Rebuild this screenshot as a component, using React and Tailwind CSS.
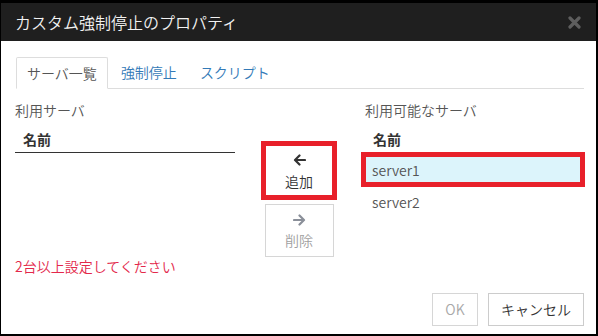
import React from "react";

const font = { fontFamily: '"Noto Sans CJK JP", "Noto Sans", sans-serif' };

function ArrowLeft({ color }) {
  return (
    <svg width="13" height="12" viewBox="0 0 13 12" fill="none">
      <path d="M12 6H2.5M6.5 1.5L2 6l4.5 4.5" stroke={color} strokeWidth="2.2" strokeLinecap="round" strokeLinejoin="round" />
    </svg>
  );
}
function ArrowRight({ color }) {
  return (
    <svg width="13" height="12" viewBox="0 0 13 12" fill="none">
      <path d="M1 6h9.5M6.5 1.5L11 6l-4.5 4.5" stroke={color} strokeWidth="2.2" strokeLinecap="round" strokeLinejoin="round" />
    </svg>
  );
}

export default function App() {
  return (
    <div className="w-[598px] h-[336px] bg-black pt-[3px] pl-[1px] pr-[2px] pb-[2px] font-[350]" style={font}>
      <div className="flex flex-col w-full h-full bg-white">
        {/* Header */}
        <div className="h-[38px] shrink-0 bg-[#1f1f1f] flex items-center justify-between pl-[14px] pr-[15px]">
          <span className="text-[16px] leading-[20px] text-[#f2f2f2]">カスタム強制停止のプロパティ</span>
          <svg width="13" height="13" viewBox="0 0 13 13">
            <path d="M2 2L11 11M11 2L2 11" stroke="#5e5e5e" strokeWidth="3.2" strokeLinecap="round" />
          </svg>
        </div>

        {/* Tabs */}
        <div className="mt-[16px] ml-[15px] mr-[12px] flex border-b border-[#dddddd] h-[32px]">
          <div className="h-[32px] -mb-[1px] border border-[#dddddd] border-b-white bg-white rounded-t-[2px] px-[10px] flex items-center text-[14px] text-[#555555]">
            サーバ一覧
          </div>
          <div className="ml-[2px] h-[31px] px-[11px] flex items-center text-[14px] text-[#337ab7]">強制停止</div>
          <div className="ml-[1px] h-[31px] px-[11px] flex items-center text-[14px] text-[#337ab7]">スクリプト</div>
        </div>

        {/* Body */}
        <div className="flex pl-[14px]">
          {/* Left */}
          <div className="w-[220px] pt-[11px]">
            <div className="h-[20px] text-[14px] leading-[20px] text-[#555555]">利用サーバ</div>
            <div className="h-[33px] flex items-end pb-[3px] border-b border-[#333333] pl-[8px]">
              <span className="text-[14px] leading-[20px] font-bold text-[#333333]">名前</span>
            </div>
          </div>

          {/* Middle */}
          <div className="ml-[26px] w-[76px] pt-[52px] flex flex-col items-center">
            <div className="w-[76px] h-[59px] border-[5px] border-[#e8202a] bg-white flex flex-col items-center justify-center">
              <div className="h-[16px] flex items-center mt-[1px]"><ArrowLeft color="#333333" /></div>
              <div className="text-[14px] leading-[20px] text-[#333333] mt-[3px]">追加</div>
            </div>
            <div className="mt-[4px] w-[69px] h-[53px] border border-[#d6d6d6] bg-white flex flex-col items-center justify-center">
              <div className="h-[16px] flex items-center"><ArrowRight color="#8a8f99" /></div>
              <div className="text-[14px] leading-[20px] text-[#a0a0a0] mt-[2px]">削除</div>
            </div>
          </div>

          {/* Right */}
          <div className="ml-[24px] w-[224px] pt-[11px]">
            <div className="h-[20px] text-[14px] leading-[20px] text-[#555555] pl-[4px]">利用可能なサーバ</div>
            <div className="h-[32px] flex items-end pb-[3px] pl-[12px]">
              <span className="text-[14px] leading-[20px] font-bold text-[#333333]">名前</span>
            </div>
            <div className="h-[35px] border-[5px] border-[#e8202a] bg-[#dcf4fb] flex items-center pl-[6px]">
              <span className="text-[14px] leading-[20px] text-[#555555]">server1</span>
            </div>
            <div className="h-[30px] flex items-center pl-[11px]">
              <span className="text-[14px] leading-[20px] text-[#555555]">server2</span>
            </div>
          </div>
        </div>

        {/* Error */}
        <div className="pl-[14px] h-[20px] text-[14px] leading-[19px] text-[#e3284b]">2台以上設定してください</div>

        {/* Footer */}
        <div className="mt-auto flex justify-end gap-[10px] pr-[12px] pb-[8px]">
          <div className="w-[46px] h-[33px] border border-[#d6d6d6] flex items-center justify-center text-[14px] text-[#a8a8a8]">OK</div>
          <div className="w-[96px] h-[33px] border border-[#cccccc] flex items-center justify-center text-[14px] text-[#333333]">キャンセル</div>
        </div>
      </div>
    </div>
  );
}
